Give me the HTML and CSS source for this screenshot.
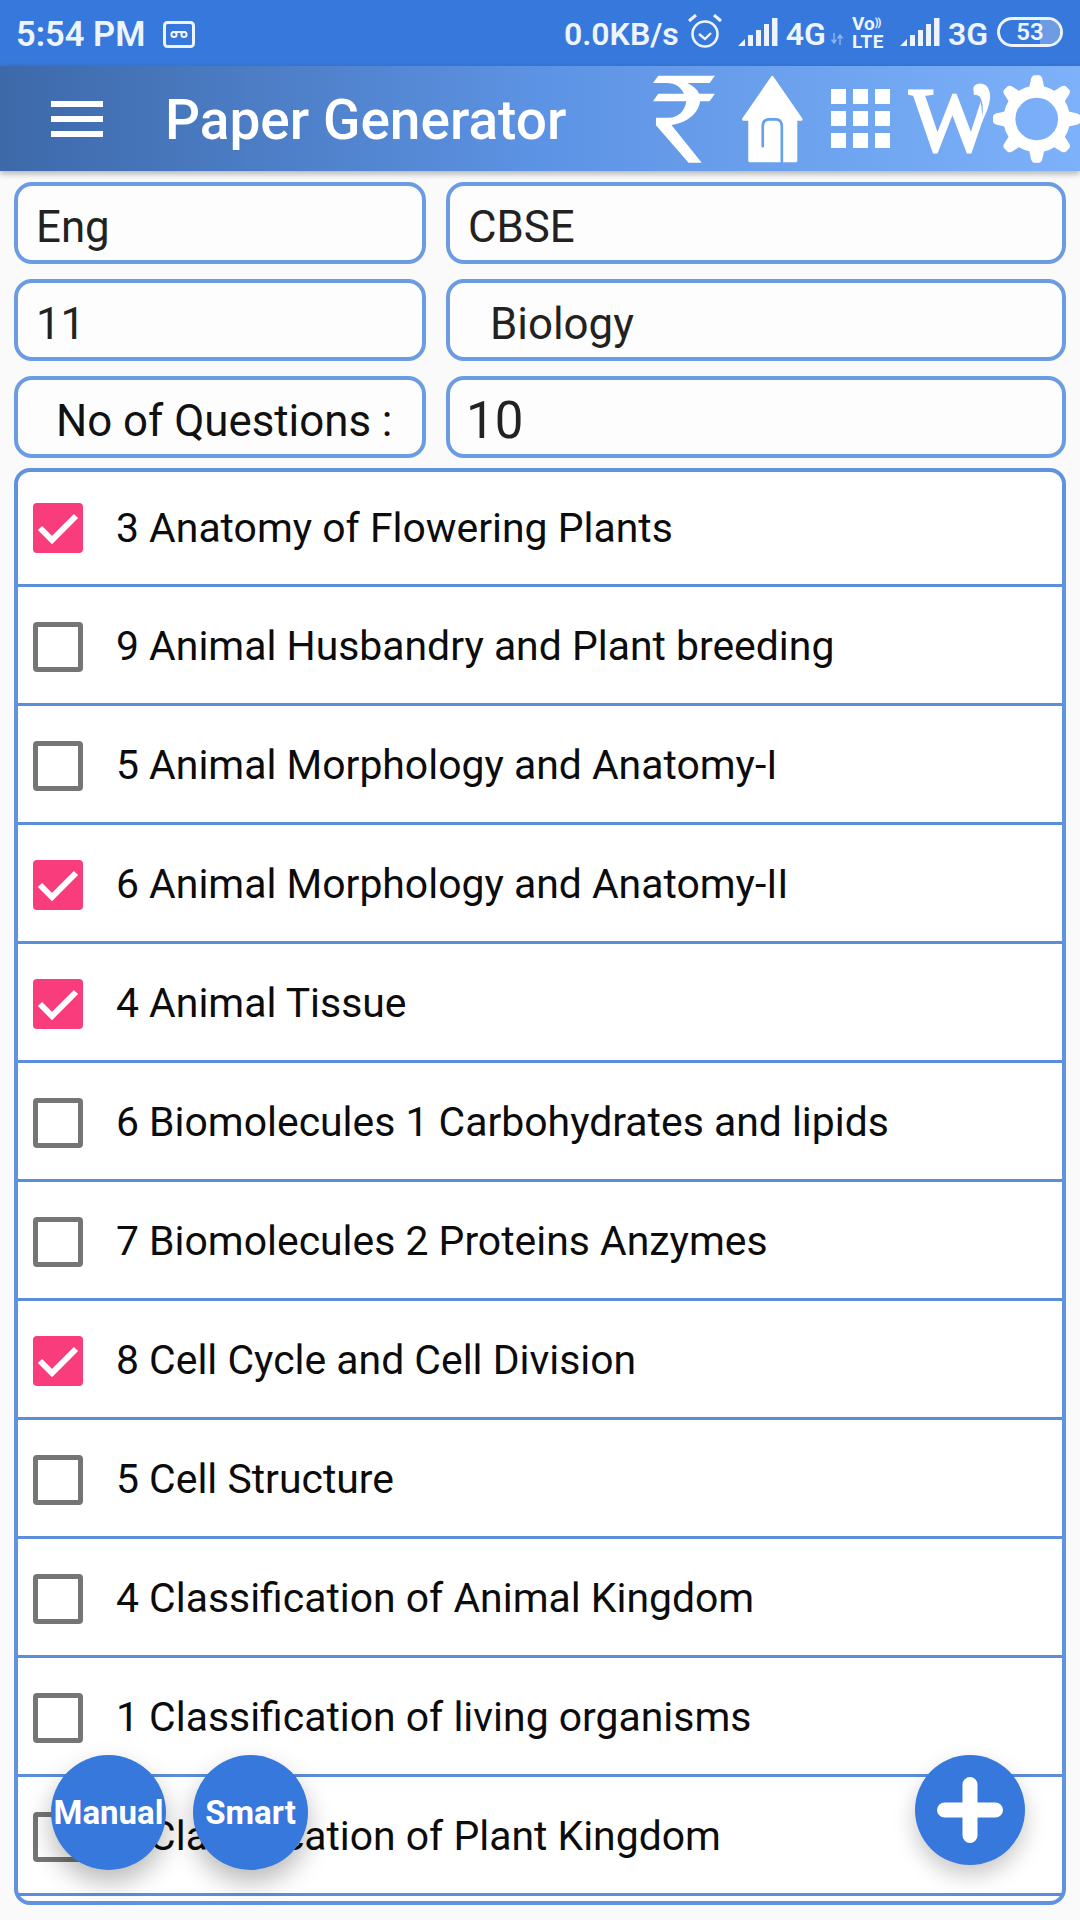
FILE: index.html
```html
<!DOCTYPE html>
<html lang="en">
<head>
<meta charset="utf-8">
<title>Paper Generator</title>
<link rel="stylesheet" href="styles.css">
</head>
<body>
<div class="page">
  <header class="status">
    <div class="status-left">
      <span class="time">5:54 PM</span>
      <svg class="voicemail" viewBox="0 0 32 27"><rect x="1.5" y="1.5" width="29" height="24" rx="3" fill="none" stroke="#eef4fd" stroke-width="3"/><circle cx="11" cy="13.5" r="2.6" fill="none" stroke="#eef4fd" stroke-width="2"/><circle cx="21" cy="13.5" r="2.6" fill="none" stroke="#eef4fd" stroke-width="2"/><path d="M9 11h14" stroke="#eef4fd" stroke-width="2"/></svg>
    </div>
    <div class="status-right">
      <span class="st-text speed">0.0KB/s</span>
      <svg class="alarm" viewBox="0 0 34 34"><circle cx="17" cy="20" r="12.5" fill="none" stroke="#eef4fd" stroke-width="2.6"/><path d="M11 20l6 5 6-6" fill="none" stroke="#eef4fd" stroke-width="2.4"/><path d="M1 7l7-6M26 1l7 6" fill="none" stroke="#eef4fd" stroke-width="3"/></svg>
      <svg class="signal" viewBox="0 0 40 28"><path d="M0 28l7-7v7zM10 17h5v11h-5zM18 12h5v16h-5zM26 6h5v22h-5zM34 0h5.500v28H34z" fill="#eef4fd"/></svg>
      <span class="st-text net4g">4G</span>
      <svg class="arrows" viewBox="0 0 12 12"><path d="M3 0v9M0.500 6.500L3 10l2.500-3.500M9 12V3M6.500 5.500L9 2l2.500 3.500" fill="none" stroke="#8fb5ec" stroke-width="1.400"/></svg>
      <span class="volte"><span class="volte-top">Vo<span class="waves">))</span></span><span class="volte-bottom">LTE</span></span>
      <svg class="signal signal-b" viewBox="0 0 40 28"><path d="M0 28l7-7v7zM10 17h5v11h-5zM18 12h5v16h-5zM26 6h5v22h-5zM34 0h5.500v28H34z" fill="#eef4fd"/></svg>
      <span class="st-text net3g">3G</span>
      <span class="battery"><span class="battery-level"></span><span class="battery-num">53</span></span>
    </div>
  </header>

  <div class="toolbar">
    <span class="menu"><i></i><i></i><i></i></span>
    <h1 class="title">Paper Generator</h1>
    <div class="actions">
      <svg class="rupee" viewBox="38 16 190 266"><path fill="#fff" d="M54 18H226L210 40H142C160 48 172 59 178 72H226L210 95H181C176 132 142 160 94 167L186 282H146L47 168V145H85C115 145 135 125 139 95H38L54 72H132C122 52 105 40 80 40H38Z"/></svg>
      <svg class="home" viewBox="300 16 190 266"><path fill="#fff" stroke="#fff" stroke-width="8" stroke-linejoin="round" d="M395 22L483 150H467V276H326V150H307Z"/><path fill="none" stroke="#659fee" stroke-width="8" stroke-linecap="round" d="M366 232V172Q366 150 386 150H405Q424 150 424 172V280"/></svg>
      <span class="apps"><i></i><i></i><i></i><i></i><i></i><i></i><i></i><i></i><i></i></span>
      <svg class="wicon" viewBox="0 0 84 80"><clipPath id="wclip"><path d="M-2 0H70L76 44L66 80H-2Z"/></clipPath><g clip-path="url(#wclip)"><text class="wicon-letter" x="1" y="72">W</text></g><path fill="#fff" d="M66 8C68 3 77 3 80 8C85 15 83 26 74 44C76 32 76 23 72 17C68 15 65 12 66 8Z"/></svg>
      <svg class="gear" viewBox="0 0 88 88"><circle cx="44" cy="44" r="27.500" fill="none" stroke="#fff" stroke-width="12"/><g fill="#fff"><path d="M36 14L38.500 3Q39 1 41 0H47Q49 1 49.500 3L52 14Z"/><path transform="rotate(45 44 44)" d="M36 14L38.500 3Q39 1 41 0H47Q49 1 49.500 3L52 14Z"/><path transform="rotate(90 44 44)" d="M36 14L38.500 3Q39 1 41 0H47Q49 1 49.500 3L52 14Z"/><path transform="rotate(135 44 44)" d="M36 14L38.500 3Q39 1 41 0H47Q49 1 49.500 3L52 14Z"/><path transform="rotate(180 44 44)" d="M36 14L38.500 3Q39 1 41 0H47Q49 1 49.500 3L52 14Z"/><path transform="rotate(225 44 44)" d="M36 14L38.500 3Q39 1 41 0H47Q49 1 49.500 3L52 14Z"/><path transform="rotate(270 44 44)" d="M36 14L38.500 3Q39 1 41 0H47Q49 1 49.500 3L52 14Z"/><path transform="rotate(315 44 44)" d="M36 14L38.500 3Q39 1 41 0H47Q49 1 49.500 3L52 14Z"/></g></svg>
    </div>
  </div>

  <main class="content">
    <section class="form">
      <div class="field">Eng</div>
      <div class="field field-r">CBSE</div>
      <div class="field">11</div>
      <div class="field field-r field-indent">Biology</div>
      <div class="field field-label">No of Questions :</div>
      <div class="field field-r field-num">10</div>
    </section>

    <section class="list">
      <label class="row"><span class="box on"><svg viewBox="0 0 50 50"><path d="M7 25l12 12L43 13" fill="none" stroke="#fff" stroke-width="6"/></svg></span><span class="row-text">3 Anatomy of Flowering Plants</span></label>
      <label class="row"><span class="box"></span><span class="row-text">9 Animal Husbandry and Plant breeding</span></label>
      <label class="row"><span class="box"></span><span class="row-text">5 Animal Morphology and Anatomy-I</span></label>
      <label class="row"><span class="box on"><svg viewBox="0 0 50 50"><path d="M7 25l12 12L43 13" fill="none" stroke="#fff" stroke-width="6"/></svg></span><span class="row-text">6 Animal Morphology and Anatomy-II</span></label>
      <label class="row"><span class="box on"><svg viewBox="0 0 50 50"><path d="M7 25l12 12L43 13" fill="none" stroke="#fff" stroke-width="6"/></svg></span><span class="row-text">4 Animal Tissue</span></label>
      <label class="row"><span class="box"></span><span class="row-text">6 Biomolecules 1 Carbohydrates and lipids</span></label>
      <label class="row"><span class="box"></span><span class="row-text">7 Biomolecules 2 Proteins Anzymes</span></label>
      <label class="row"><span class="box on"><svg viewBox="0 0 50 50"><path d="M7 25l12 12L43 13" fill="none" stroke="#fff" stroke-width="6"/></svg></span><span class="row-text">8 Cell Cycle and Cell Division</span></label>
      <label class="row"><span class="box"></span><span class="row-text">5 Cell Structure</span></label>
      <label class="row"><span class="box"></span><span class="row-text">4 Classification of Animal Kingdom</span></label>
      <label class="row"><span class="box"></span><span class="row-text">1 Classification of living organisms</span></label>
      <label class="row"><span class="box"></span><span class="row-text">2 Classification of Plant Kingdom</span></label>
      <div class="list-end"></div>
    </section>
  </main>

  <button class="fab fab-manual">Manual</button>
  <button class="fab fab-smart">Smart</button>
  <button class="fab fab-add" aria-label="Add"><svg viewBox="0 0 66 66"><path d="M33 7.500v51M7.500 33h51" fill="none" stroke="#fff" stroke-width="15" stroke-linecap="round"/></svg></button>
</div>
</body>
</html>
```
FILE: styles.css
```css
* { box-sizing: border-box; }
html, body { margin: 0; padding: 0; }
body { font-family: Roboto, "Noto Sans", sans-serif; background: #fafafa; color: #111; }
.page { position: relative; width: 1080px; height: 1920px; overflow: hidden; display: flex; flex-direction: column; background: #fafafa; }

/* status bar */
.status { flex: none; height: 66px; background: #3678db; display: flex; align-items: center; justify-content: space-between; padding: 2px 17px 0 16px; color: #eef4fd; }
.status-left, .status-right { display: flex; align-items: center; }
.time { font-size: 34.500px; font-weight: 600; line-height: 1; }
.voicemail { width: 32px; height: 27px; margin-left: 18px; }
.st-text { font-size: 32px; font-weight: 600; line-height: 1; }
.alarm { width: 34px; height: 34px; margin: 0 16px 0 9px; position: relative; top: -3px; }
.signal { width: 40px; height: 28px; margin-right: 8px; position: relative; top: -2px; }
.signal-b { margin: 0 8px 0 15px; }
.arrows { width: 12px; height: 12px; margin: 10px 9px 0 5px; }
.volte { display: flex; flex-direction: column; align-items: flex-start; width: 33px; font-weight: 700; font-size: 16px; line-height: 15px; position: relative; top: -2px; }
.volte-top { font-size: 19px; white-space: nowrap; }
.waves { font-size: 11px; position: relative; top: -4px; letter-spacing: -1px; }
.volte-bottom { font-size: 19px; letter-spacing: 0.5px; }
.battery { position: relative; width: 66px; height: 30px; margin-left: 9px; border: 3px solid #eef4fd; border-radius: 15px; display: flex; align-items: center; justify-content: center; overflow: hidden; top: -2px; }
.battery-level { position: absolute; top: 0; bottom: 0; right: 0; width: 20px; background: #6d9ce5; }
.battery-num { position: relative; font-size: 24px; font-weight: 600; line-height: 1; }

/* toolbar */
.toolbar { position: relative; z-index: 2; flex: none; height: 105px; display: flex; align-items: center; background: linear-gradient(90deg, #3d69a9 0%, #5d93e4 50%, #7db1f9 100%); box-shadow: 0 3px 6px rgba(0,0,0,.28); }
.menu { display: flex; flex-direction: column; gap: 9px; width: 52px; margin-left: 51px; }
.menu i { display: block; height: 6px; background: #fff; }
.title { margin: 3px 0 0 62px; font-size: 55px; font-weight: 500; color: #fff; line-height: 1; white-space: nowrap; }
.actions { position: absolute; left: 653px; top: 0; bottom: 0; right: 0; display: flex; align-items: center; }
.rupee { width: 63px; height: 88px; }
.home { width: 63px; height: 88px; margin-left: 25px; }
.apps { display: grid; grid-template-columns: repeat(3, 15px); grid-auto-rows: 15px; gap: 7px; margin-left: 28px; }
.apps i { display: block; background: #fff; }
.wicon { width: 84px; height: 80px; margin-left: 18px; }
.wicon-letter { font-family: "Liberation Serif", serif; font-weight: 400; font-size: 92px; fill: #fff; stroke: #fff; stroke-width: 3px; }
.gear { width: 88px; height: 88px; margin-left: 1px; }

/* form */
.content { padding: 11px 14px 0; }
.form { display: grid; grid-template-columns: 412px 620px; grid-auto-rows: 82px; column-gap: 20px; row-gap: 15px; }
.field { border: 4px solid #6b9be3; border-radius: 18px; display: flex; align-items: center; padding: 7px 0 0 18px; font-size: 43.800px; color: #222; background: #fdfdfd; }
.field-r { padding-left: 18px; }
.field-indent { padding-left: 40px; }
.field-label { padding-left: 38px; color: #111; }
.field-num { font-size: 51px; padding: 7px 0 0 16px; }

/* list */
.list { margin-top: 10px; border: 4px solid #5f92df; border-radius: 16px; background: #fff; }
.row { display: flex; align-items: center; height: 119px; padding-top: 3px; padding-left: 15px; border-bottom: 3px solid #5a8edc; }
.row:first-child { height: 115px; padding-top: 0; }
.box { flex: none; width: 50px; height: 50px; border: 5px solid #757575; border-radius: 4px; }
.box.on { border: none; background: #f93d7c; }
.box svg { display: block; width: 50px; height: 50px; }
.row-text { margin-left: 33px; font-size: 40.900px; line-height: 1; color: #0c0c0c; white-space: nowrap; }
.list-end { height: 5px; }

/* floating buttons */
.fab { position: absolute; padding: 0; border: none; border-radius: 50%; background: #3678db; color: #fff; font-family: Roboto, sans-serif; font-weight: 700; font-size: 33px; display: flex; align-items: center; justify-content: center; box-shadow: 0 12px 26px rgba(0,0,0,.28); white-space: nowrap; }
.fab-manual { left: 51px; top: 1755px; width: 115px; height: 115px; }
.fab-smart { left: 193px; top: 1755px; width: 115px; height: 115px; }
.fab-add { left: 915px; top: 1755px; width: 110px; height: 110px; box-shadow: 0 10px 22px rgba(0,0,0,.22); }
.fab-add svg { width: 66px; height: 66px; }
```
